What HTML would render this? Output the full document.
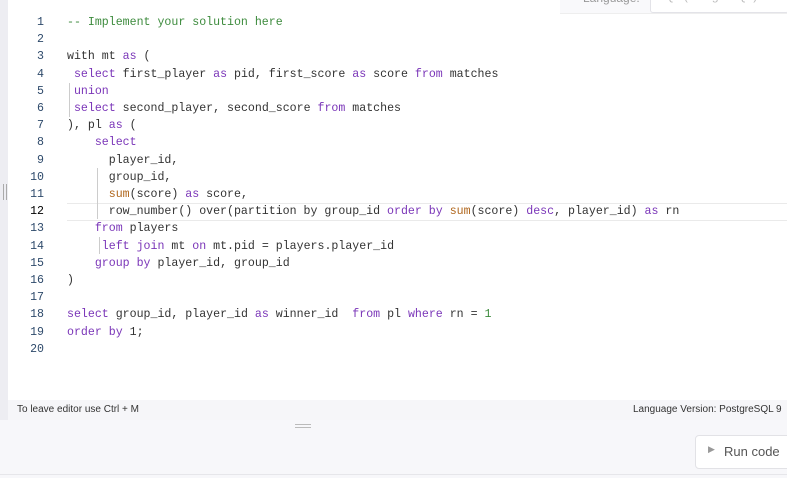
<!DOCTYPE html>
<html><head><style>
body{margin:0;width:787px;height:478px;background:#f7f7fa;position:relative;overflow:hidden;font-family:"Liberation Sans",sans-serif}
.ed{position:absolute;left:8px;top:0;width:779px;height:400px;background:#fff}
.top{position:absolute;left:560px;top:0;width:227px;height:13px;background:#f9f9fb;border-bottom:1px solid #eee}
.top span{position:absolute;font-size:12px;color:#999;top:-9px}
.sel{position:absolute;left:650px;top:-2px;width:137px;height:14px;border:1px solid #e3e3e8;border-top:none;background:#fff;border-radius:0 0 3px 3px}
.code{position:absolute;left:0;top:14px;font-family:"Liberation Mono",monospace;font-size:11.6px;line-height:17.2px;white-space:pre;color:#333}
.ln{position:absolute;left:8px;top:0;width:36px;text-align:right;color:#2e4a6b}
.tx{position:absolute;left:67px;top:0}
.k{color:#7a35b8}.c{color:#3d8b3d}.f{color:#b0661c}.n{color:#3d8b3d}
.hl{position:absolute;left:67px;top:203px;width:720px;height:16px;border-top:1px solid #eaeaea;border-bottom:1px solid #eaeaea}
.g{position:absolute;width:1px;background:#ccc}
.foot{position:absolute;left:8px;top:400px;width:779px;height:20px;background:#f6f6f9;font-size:10px;color:#333}
.btn{position:absolute;left:695px;top:435px;width:100px;height:32px;border:1px solid #e2e2e6;border-radius:4px;background:#fff;font-size:13px;color:#555}
</style></head><body>
<div class="ed"></div>
<div style="position:absolute;left:0;top:0;width:8px;height:420px;background:#ededf2"></div>
<div style="position:absolute;left:3px;top:184px;width:1px;height:16px;background:#aaa"></div>
<div style="position:absolute;left:6px;top:184px;width:1px;height:16px;background:#aaa"></div>
<div class="top"><span style="left:23px">Language:</span></div>
<div class="sel"><span style="position:absolute;left:6px;top:-9px;font-size:12px;color:#bbb">SQL (PostgreSQL)</span></div>
<div class="hl"></div>
<div class="g" style="left:69px;top:83px;height:34px"></div>
<div class="g" style="left:97px;top:168px;height:51px"></div>
<div class="g" style="left:99px;top:237px;height:17px"></div>
<div class="code"><div class="ln">1
2
3
4
5
6
7
8
9
10
11
<span style="color:#000">12</span>
13
14
15
16
17
18
19
20</div><div class="tx"><span class="c">-- Implement your solution here</span>

with mt <span class="k">as</span> (
 <span class="k">select</span> first_player <span class="k">as</span> pid, first_score <span class="k">as</span> score <span class="k">from</span> matches
 <span class="k">union</span>
 <span class="k">select</span> second_player, second_score <span class="k">from</span> matches
), pl <span class="k">as</span> (
    <span class="k">select</span>
      player_id,
      group_id,
      <span class="f">sum</span>(score) <span class="k">as</span> score,
      row_number() over(partition by group_id <span class="k">order by</span> <span class="f">sum</span>(score) <span class="k">desc</span>, player_id) <span class="k">as</span> rn
    <span class="k">from</span> players
     <span class="k">left join</span> mt <span class="k">on</span> mt.pid = players.player_id
    <span class="k">group by</span> player_id, group_id
)

<span class="k">select</span> group_id, player_id <span class="k">as</span> winner_id  <span class="k">from</span> pl <span class="k">where</span> rn = <span class="n">1</span>
<span class="k">order by</span> 1;
</div></div>
<div class="foot"><span style="position:absolute;left:9px;top:4px">To leave editor use Ctrl + M</span><span style="position:absolute;left:625px;top:4px;white-space:nowrap">Language Version: PostgreSQL 9</span></div>
<div style="position:absolute;left:295px;top:424px;width:16px;height:1px;background:#bbb"></div>
<div style="position:absolute;left:295px;top:427px;width:16px;height:1px;background:#bbb"></div>
<div class="btn"><span style="position:absolute;left:12px;top:8px;font-size:9px;color:#999">▶</span><span style="position:absolute;left:28px;top:8px">Run code</span></div>
<div style="position:absolute;left:0;top:474px;width:787px;height:1px;background:#e6e6ea"></div>
</body></html>
